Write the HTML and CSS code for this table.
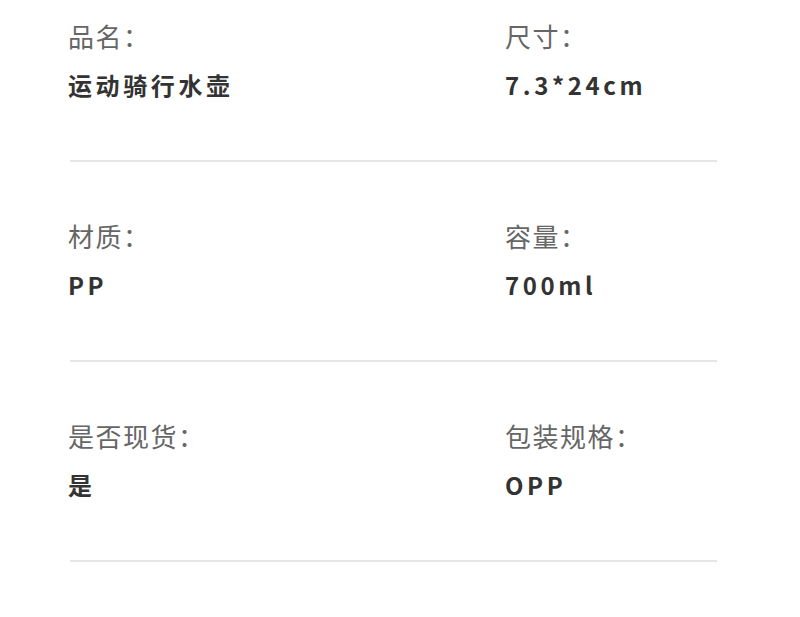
FILE: index.html
```html
<!DOCTYPE html>
<html lang="zh">
<head>
<meta charset="utf-8">
<link rel="stylesheet" href="styles.css">
</head>
<body>
<div class="page">
  <div class="row">
    <div class="cells">
      <div class="cell"><div class="label">品名：</div><div class="value">运动骑行水壶</div></div>
      <div class="cell"><div class="label">尺寸：</div><div class="value">7.3*24cm</div></div>
    </div>
  </div>
  <div class="row">
    <div class="cells">
      <div class="cell"><div class="label">材质：</div><div class="value">PP</div></div>
      <div class="cell"><div class="label">容量：</div><div class="value">700ml</div></div>
    </div>
  </div>
  <div class="row">
    <div class="cells">
      <div class="cell"><div class="label">是否现货：</div><div class="value">是</div></div>
      <div class="cell"><div class="label">包装规格：</div><div class="value">OPP</div></div>
    </div>
  </div>
</div>
</body>
</html>
```
FILE: styles.css
```css
html, body {
  margin: 0;
  padding: 0;
  background: #fff;
}
.page {
  padding: 22px 0 0 0;
  font-family: "Noto Sans CJK SC", "Noto Sans", sans-serif;
}
.row {
  margin: 0 83px 60px 70px;
  padding-bottom: 59px;
  border-bottom: 2px solid #e6e6e6;
}
.cells {
  display: grid;
  grid-template-columns: 437px 1fr;
  margin-left: -2px;
}
.label {
  font-size: 26px;
  line-height: 28px;
  color: #666;
  font-weight: 400;
  letter-spacing: 1.5px;
}
.value {
  margin-top: 19px;
  font-size: 24px;
  line-height: 32px;
  color: #333;
  font-weight: 700;
  letter-spacing: 3.6px;
}
```
